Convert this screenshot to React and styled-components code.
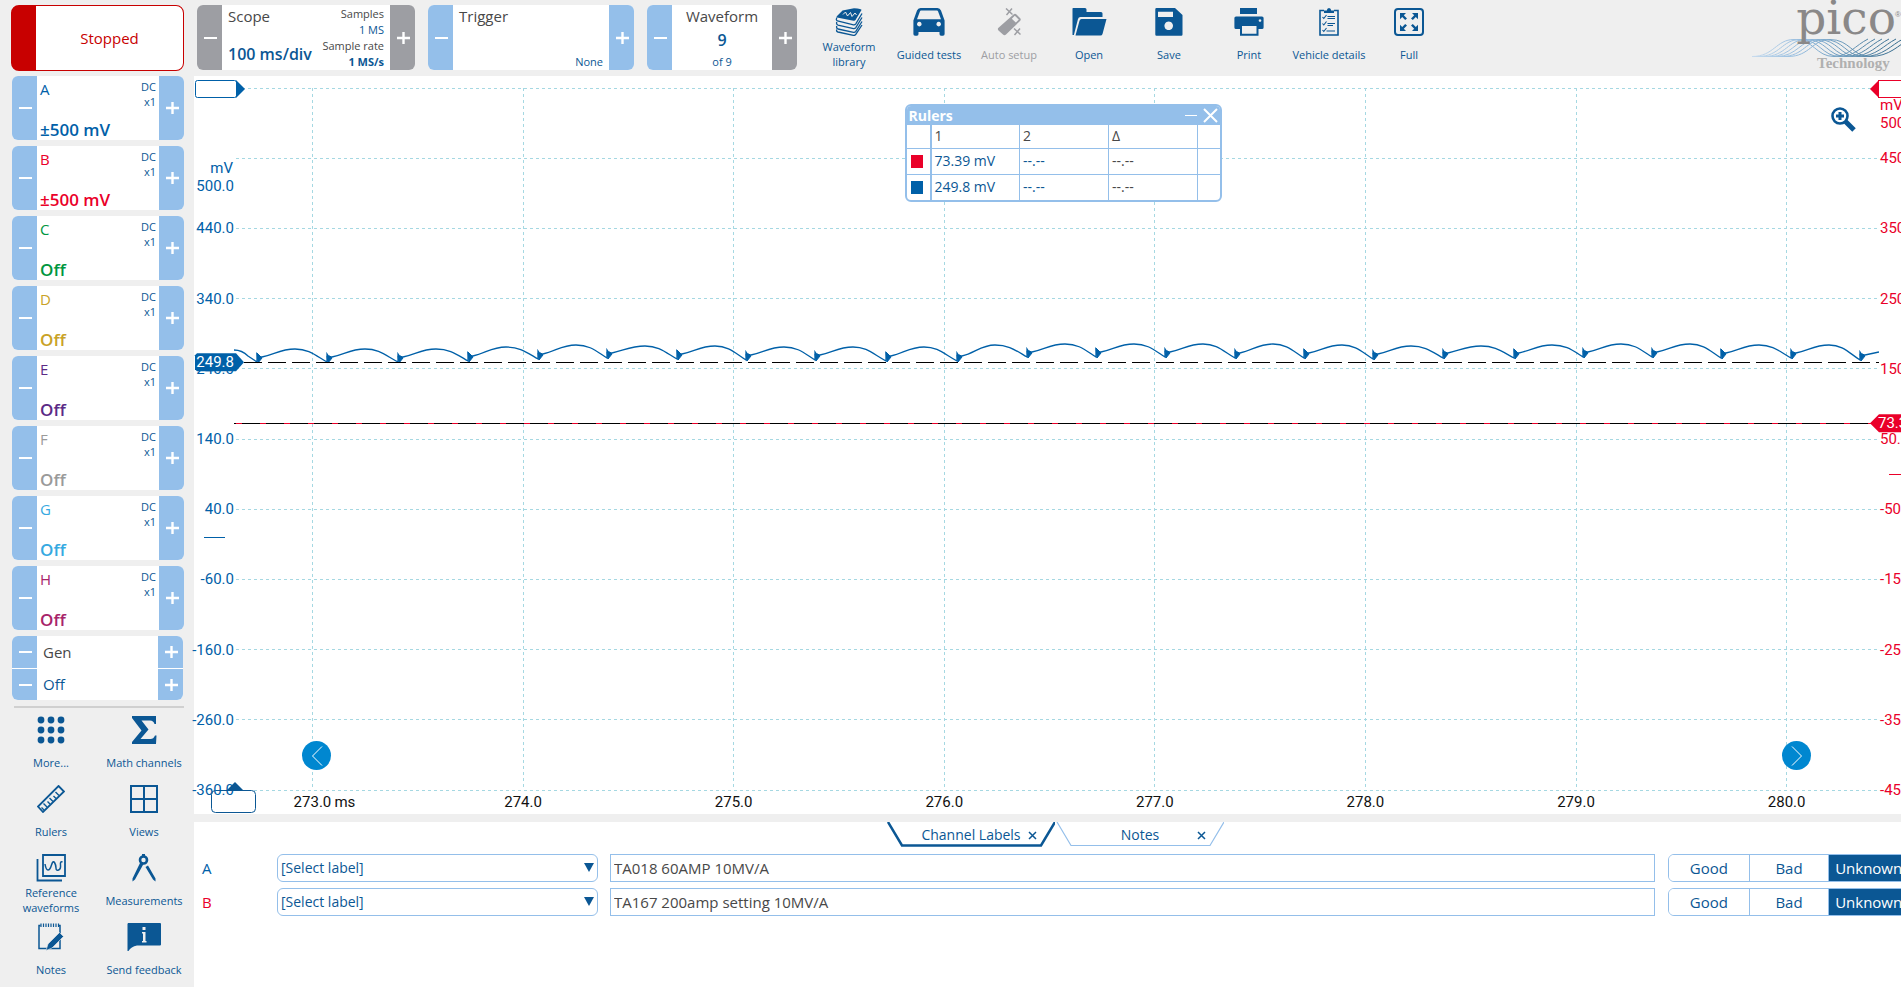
import React from "react";
import styled, { createGlobalStyle, css } from "styled-components";

const UI = '"Open Sans", "Noto Sans", sans-serif';
const navy = "#0b5794";
const sky = "#94bfea";
const grey = "#9d9ea3";
const blueTrace = "#0060a8";
const redTrace = "#ea0029";

const GlobalStyle = createGlobalStyle`
  *, *::before, *::after { box-sizing: border-box; }
  body { margin: 0; background: #efefef; font: 15px/20px ${UI}; color: ${navy}; }
  button, input, select { font: inherit; color: inherit; margin: 0; }
  button { border: 0; background: none; padding: 0; cursor: pointer; }
  svg { display: block; }
`;

/* ---------- shell ---------- */
const Viewport = styled.div`
  overflow: hidden;
`;
const Page = styled.div`
  display: flex;
  min-height: 100vh;
  margin-right: -18px;
`;
const Sidebar = styled.aside`
  flex: 0 0 194px;
  min-width: 0;
  padding: 5px 10px 0 12px;
  display: flex;
  flex-direction: column;
`;
const Main = styled.main`
  flex: 1;
  min-width: 0;
  display: flex;
  flex-direction: column;
`;

/* ---------- sidebar ---------- */
const RunButton = styled.button`
  height: 66px;
  margin: 0 0 5px -1px;
  border: 1px solid #c80000;
  border-left-width: 25px;
  border-radius: 8px;
  background: #fff;
  color: #c80000;
  text-align: center;
`;
const ChannelList = styled.div`
  display: flex;
  flex-direction: column;
  gap: 6px;
`;
const Card = styled.section`
  display: flex;
  height: ${(p) => p.$h || 64}px;
  width: ${(p) => (p.$w ? p.$w + "px" : "auto")};
  border-radius: 6px;
  overflow: hidden;
  background: #fff;
`;
const Step = styled.button`
  flex: 0 0 25px;
  display: grid;
  place-items: center;
  background: ${(p) => (p.$off ? grey : sky)};
`;
const ChannelBody = styled.div`
  flex: 1;
  display: grid;
  grid-template-columns: 1fr auto;
  grid-template-rows: 1fr 20px;
  padding: 3px 3px 0 3px;
  color: ${(p) => p.$color};
`;
const ChannelRange = styled.strong`
  font-size: 17px;
  font-weight: 600;
  grid-column: 1 / -1;
`;
const Coupling = styled.span`
  font-size: 11px;
  line-height: 15px;
  text-align: right;
  color: ${navy};
`;
const GenRows = styled.section`
  display: flex;
  flex-direction: column;
  gap: 1px;
  margin-right: 1px;
  border-radius: 6px;
  overflow: hidden;
`;
const GenRow = styled.div`
  display: flex;
  height: ${(p) => p.$h}px;
  background: #fff;
  box-shadow: 0 1px #fff;
`;
const GenText = styled.span`
  flex: 1;
  padding: ${(p) => p.$top}px 6px 0;
  color: ${(p) => p.$color};
`;
const Divider = styled.hr`
  width: 170px;
  margin: 6px 0 6px 2px;
  border: 0;
  border-top: 2px solid #d0d0d0;
`;
const ToolGrid = styled.nav`
  display: grid;
  grid-template-columns: 78px 108px;
  grid-auto-rows: 66px;
  row-gap: 3px;
  margin-right: -14px;
`;
const Tool = styled.button`
  display: grid;
  grid-template-rows: 28px 1fr;
  gap: 2px;
  height: 66px;
  justify-items: center;
  align-items: center;
  font-size: 11px;
  line-height: 15px;
  text-align: center;
  color: ${(p) => (p.disabled ? grey : navy)};
  padding: 2px 0;
`;

/* ---------- top bar ---------- */
const TopBar = styled.header`
  flex: 0 0 76px;
  display: flex;
  align-items: flex-start;
  padding: 5px 0 0 3px;
`;
const Deck = styled.div`
  display: flex;
  gap: 13px;
`;
const DeckBody = styled.div`
  flex: 1;
  display: flex;
  justify-content: space-between;
  white-space: nowrap;
  padding: 1px 6px;
`;
const Column = styled.div`
  display: flex;
  flex-direction: column;
  justify-content: space-between;
  ${(p) =>
    p.$align &&
    css`
      width: ${p.$align === "center" ? "100%" : "auto"};
      align-items: ${p.$align};
    `}
`;
const Title = styled.span`
  color: #484848;
`;
const Big = styled.strong`
  font-size: 16px;
  font-weight: 600;
  line-height: ${(p) => p.$lh || 30}px;
`;
const Small = styled.span`
  font-size: 11px;
  line-height: 15px;
  font-weight: ${(p) => (p.$bold ? 700 : 400)};
  color: ${(p) => p.$color || navy};
`;
const TopTools = styled.nav`
  display: flex;
  margin: 1px 0 0 12px;
  & > button {
    width: 80px;
  }
`;
const Brand = styled.div`
  margin: -5px 17px 0 auto;
`;

/* ---------- chart ---------- */
const ChartArea = styled.section`
  position: relative;
  flex: 1;
  min-height: 400px;
  display: flex;
  background: #fff;
  padding: 12px 40px 24px 40px;
`;
const Plot = styled.svg`
  flex: 1;
  min-width: 0;
  overflow: visible;
  font: 15px Roboto, sans-serif;
`;
const PageArrow = styled.button`
  position: absolute;
  bottom: 44px;
  ${(p) => p.$side}: 108px;
  width: 29px;
  height: 29px;
  border-radius: 50%;
  background: #0087d0;
  display: grid;
  place-items: center;
`;
const ZoomButton = styled.button`
  position: absolute;
  top: 30px;
  right: 62px;
`;
const RulerWindow = styled.section`
  position: absolute;
  top: 28px;
  left: calc(50% - 152px);
  width: 317px;
  border: 2px solid ${sky};
  border-radius: 6px;
  overflow: hidden;
  background: #fff;
`;
const RulerTitle = styled.header`
  display: flex;
  align-items: center;
  height: 19px;
  padding: 0 2px 0 2px;
  gap: 5px;
  background: ${sky};
  color: #fff;
  font-weight: 700;
  font-size: 14px;
  & > span {
    flex: 1;
  }
`;
const RulerTable = styled.table`
  width: 100%;
  table-layout: fixed;
  border-collapse: collapse;
  th,
  td {
    height: 26px;
    padding: 0 0 0 3px;
    font-weight: 400;
    font-size: 14px;
    line-height: 20px;
    text-align: left;
    white-space: nowrap;
    border-top: 1px solid ${sky};
    border-left: 1px solid ${sky};
  }
  th {
    height: 23px;
    border-top: 0;
    color: #484848;
  }
  tr > :first-child {
    border-left: 0;
    padding-left: 4px;
  }
  tr > :nth-child(2) {
    border-left-width: 2px;
  }
  td:nth-child(4) {
    color: #484848;
  }
`;
const Swatch = styled.span`
  display: block;
  width: 12px;
  height: 13px;
  background: ${(p) => p.$color};
`;

/* ---------- label panel ---------- */
const Panel = styled.section`
  min-height: 165px;
  margin-top: 8px;
  padding: 0 10px 16px 8px;
  background: #fff;
`;
const Tabs = styled.div`
  display: flex;
  justify-content: center;
  gap: 1px;
  margin-bottom: 7px;
  font-size: 14px;
`;
const Tab = styled.div`
  position: relative;
  width: 168px;
  height: 25px;
  display: flex;
  align-items: center;
  justify-content: center;
  & > svg {
    position: absolute;
    inset: 0;
  }
  & > button {
    position: relative;
  }
  & > button:last-child {
    position: absolute;
    right: 16px;
    top: 7px;
    padding: 2px;
  }
`;
const LabelRow = styled.div`
  display: grid;
  grid-template-columns: 63px 321px 1fr 242px;
  column-gap: 12px;
  align-items: center;
  height: 28px;
  margin-bottom: 6px;
`;
const RowName = styled.span`
  font-weight: 500;
  color: ${(p) => p.$color};
`;
const SelectBox = styled.div`
  position: relative;
  & > svg {
    position: absolute;
    right: 4px;
    top: 9px;
    pointer-events: none;
  }
`;
const Select = styled.select`
  appearance: none;
  display: block;
  width: 100%;
  height: 28px;
  padding: 0 20px 0 3px;
  border: 1px solid ${sky};
  border-radius: 6px;
  background: #fff;
  font-size: 14px;
`;
const TextBox = styled.input`
  width: 100%;
  height: 28px;
  padding: 0 3px;
  border: 1px solid ${sky};
  background: #fff;
  color: #484848;
`;
const Segments = styled.div`
  display: grid;
  grid-template-columns: repeat(3, 1fr);
  height: 28px;
  margin-left: 1px;
  border: 1px solid ${sky};
  border-radius: 6px;
  overflow: hidden;
`;
const Segment = styled.button`
  border-left: ${(p) => (p.$first ? 0 : 1)}px solid ${sky};
  background: ${(p) => (p.$on ? navy : "#fff")};
  color: ${(p) => (p.$on ? "#fff" : navy)};
`;

/* ---------- icons ---------- */
const Minus = () => (
  <svg width="14" height="14" aria-hidden="true">
    <path d="M1 7H14" stroke="#fff" strokeWidth="2" />
  </svg>
);
const Plus = () => (
  <svg width="14" height="14" aria-hidden="true">
    <path d="M1 7H14M7.500 1V13" stroke="#fff" strokeWidth="2.400" />
  </svg>
);
const Stepper = ({ name, off, children, offUp, offDown }) => (
  <>
    <Step aria-label={`${name} down`} $off={off || offDown}><Minus /></Step>
    {children}
    <Step aria-label={`${name} up`} $off={off || offUp}><Plus /></Step>
  </>
);

const Icon = ({ w, children }) => (
  <svg width={w} height="28" viewBox={`0 0 ${w} 28`} fill="currentColor" aria-hidden="true">
    {children}
  </svg>
);
const line = { fill: "none", stroke: "currentColor" };

const LibraryIcon = () => (
  <Icon w={28}>
    <path d="M7.500 2.500 19 0.300Q27 1 26.500 2L20.500 12Q20 13 18.500 12.700L2 9.500Q1 9 2 8Z" />
    <path d="M8 6.500l2.500-2.500 2 4 3-3.500 1.500 4 3-3.500 1.500 2" stroke="#efefef" fill="none" />
    <path d="M2 9.500Q.5 12 2.500 13L18.500 16.800Q20 17 20.800 15.800L27 5.500M1.800 14Q1 16.500 3 17.200L18.500 20.600Q20 20.800 20.800 19.600L27 9.500M1.800 18Q1 20.300 3 21L18.500 24.300Q20 24.500 20.800 23.300L27 13.500M1.800 21.500Q1 23.500 3 24L18.500 27.400Q20 27.600 20.800 26.400L27 17" {...line} strokeWidth="1.300" />
  </Icon>
);
const CarIcon = () => (
  <Icon w={32}>
    <path fillRule="evenodd" d="M7.500 0H24.500Q27 0 28 2.600L31.600 12.500V26Q31.600 27.800 30 27.800H28Q26.500 27.800 26.500 26V24H5.500V26Q5.500 27.800 4 27.800H2Q.4 27.800.4 26V12.500L4 2.600Q5 0 7.500 0ZM7 3.200 4 11.300H28L25 3.200Q24.700 2.400 24 2.400H8Q7.300 2.400 7 3.200ZM6.300 13.800a2.300 2.300 0 1 0 .01 0ZM25.700 13.800a2.300 2.300 0 1 0 .01 0Z" />
  </Icon>
);
const WandIcon = () => (
  <Icon w={26}>
    <path fillRule="evenodd" d="M17.500 6.500Q19 5 20.500 6.500L24 10Q25.500 11.500 24 13L10 26.500Q8.500 28 7 26.500L2.500 22.500Q1.200 21 2.500 19.800ZM18.800 7.800 15.800 10.800 19.800 14.600 22.800 11.600Z" />
    <path d="M10 .5l6.500 6M16 .5l-5.500 6.500M18 20.500l6.500 6M24 20.500l-5.500 6.500" {...line} strokeWidth="1.500" />
  </Icon>
);
const FolderIcon = () => (
  <Icon w={35}>
    <path d="M1 0H13Q14.500 0 14.500 1.500V4H29Q30.500 4 30.500 5.500V9H8.500Q6.500 9 6 11L2 26.500V27H.5V.5ZM9.500 11H34.500L30.500 26Q30 27.600 28.500 27.600H3.500L7.500 12.800Q8 11 9.500 11Z" />
  </Icon>
);
const SaveIcon = () => (
  <Icon w={28}>
    <path fillRule="evenodd" d="M1.500 0H20L27.500 7V26.500Q27.500 27.700 26.300 27.700H1.500Q.3 27.700.3 26.500V1.200Q.3 0 1.500 0ZM3 3.800V9H18V3.800ZM13.700 13.500a4.300 4.300 0 1 0 .01 0Z" />
  </Icon>
);
const PrintIcon = () => (
  <Icon w={30}>
    <path d="M6 0H23V6H6Z" />
    <path fillRule="evenodd" d="M2 8.500H28Q29.600 8.500 29.600 10V19.500Q29.600 21 28 21H24.500V27.700H6V21H2Q.4 21 .4 19.500V10Q.4 8.500 2 8.500ZM8 18V25.700H22.500V18ZM26 11.200a1.300 1.300 0 1 0 .01 0Z" />
  </Icon>
);
const VehicleIcon = () => (
  <Icon w={20}>
    <path d="M5 2.500H1V27H19V2.500H15" {...line} strokeWidth="1.600" />
    <path d="M5 5V2.500H7.800Q8 0 10 0T12.200 2.500H15V5Z" />
    <path d="M3.500 9l1.300 1.500L7.500 7M3.500 15.500l1.300 1.500 2.700-3.500M3.500 22l1.300 1.500L7.500 20M8.500 8.500H16M8.500 10.500H16M8.500 15.500H16M8.500 17.500H14M7.500 23H16" {...line} strokeWidth="1.100" />
  </Icon>
);
const FullIcon = () => (
  <Icon w={30}>
    <rect x="1" y="1" width="28" height="26" rx="3" {...line} strokeWidth="2" />
    <path d="M6 5H12L9.800 7.200 13 10.400 11.200 12 8.200 9 6 11.200ZM24 5H18L20.200 7.200 17 10.400 18.800 12 21.800 9 24 11.200ZM6 23H12L9.800 20.800 13 17.600 11.200 16 8.200 19 6 16.800ZM24 23H18L20.200 20.800 17 17.600 18.800 16 21.800 19 24 16.800Z" />
  </Icon>
);
const MoreIcon = () => (
  <Icon w={28}>
    {[4, 14, 24].map((y) => [4, 14, 24].map((x) => <circle key={`${x}-${y}`} cx={x} cy={y} r="3.400" />))}
  </Icon>
);
const SigmaIcon = () => (
  <Icon w={26}>
    <path d="M1 0H25V8H23.500Q22.500 4.500 19 4.500H10.500L17.500 13.500 9.500 23H19.500Q22.500 23 24 19.500H25.500L25 28H1V26L10.500 14.500 1 2Z" />
  </Icon>
);
const RulerIcon = () => (
  <Icon w={28}>
    <path d="M21.500 1 27 6.500 6 27 1 21.500Z" {...line} strokeWidth="1.800" />
    <path d="M7 25l-2.500-2.500M10 22l-3.500-3.500M13 19l-2.500-2.500M16 16.500l-3.500-3.500M19 13.500l-2.500-2.500M22 10.500l-3.500-3.500" {...line} strokeWidth="1.400" />
  </Icon>
);
const ViewsIcon = () => (
  <Icon w={28}>
    <path d="M1 1H27V27H1ZM14 1V27M1 14H27" {...line} strokeWidth="2" />
  </Icon>
);
const ReferenceIcon = () => (
  <Icon w={30}>
    <path d="M7 1H29V22H7Z" {...line} strokeWidth="1.800" />
    <path d="M1.500 5V26.500H26" {...line} strokeWidth="1.800" />
    <path d="M9 10Q10 16 12 16T15.500 11T18.500 8.500T20 14T22.500 16T24.500 11T26.500 8" {...line} strokeWidth="1.500" />
  </Icon>
);
const MeasureIcon = () => (
  <Icon w={26}>
    <circle cx="12.500" cy="6" r="3.500" {...line} strokeWidth="2.600" />
    <path d="M11 0H14V3H11ZM9.500 8 12.500 10 4 25.500 1.500 27.500V24.500ZM14.500 13 17 11.500 24.500 24.500V27.500L22 25.500Z" />
  </Icon>
);
const NotesIcon = () => (
  <Icon w={26}>
    <path d="M2.500 2.500H1V25.500H22V2.500H20.500" {...line} strokeWidth="1.500" />
    <path d="M3 .5V4M5.500.5V4M8 .5V4M10.500.5V4M13 .5V4M15.500.5V4M18 .5V4M20.500.5V4" {...line} strokeWidth="1.200" />
    <path d="M21.500 9.500 25.500 13.500 14 25 8 27.500 10 21Z" stroke="#efefef" strokeWidth=".6" />
  </Icon>
);
const FeedbackIcon = () => (
  <Icon w={34}>
    <path fillRule="evenodd" d="M1 0H33Q34 0 34 1V21.500Q34 22.500 33 22.500H10Q4 23.500 1.500 28H.5V1ZM15.500 4V7H18.500V4ZM15 9V10.500H16V18H15V19.500H19.500V18H18.500V9Z" />
  </Icon>
);

/* ---------- data ---------- */
const channels = [
  ["A", blueTrace, "±500 mV"],
  ["B", redTrace, "±500 mV"],
  ["C", "#009640", "Off"],
  ["D", "#c9a227", "Off"],
  ["E", "#5b2a86", "Off"],
  ["F", "#9a9a9a", "Off"],
  ["G", "#36a9e1", "Off"],
  ["H", "#a8246a", "Off"],
];
const sideTools = [
  ["More...", MoreIcon],
  ["Math channels", SigmaIcon],
  ["Rulers", RulerIcon],
  ["Views", ViewsIcon],
  ["Reference\nwaveforms", ReferenceIcon],
  ["Measurements", MeasureIcon],
  ["Notes", NotesIcon],
  ["Send feedback", FeedbackIcon],
];
const topTools = [
  ["Waveform\nlibrary", LibraryIcon],
  ["Guided tests", CarIcon],
  ["Auto setup", WandIcon],
  ["Open", FolderIcon],
  ["Save", SaveIcon],
  ["Print", PrintIcon],
  ["Vehicle details", VehicleIcon],
  ["Full", FullIcon],
];
const multiline = (text) =>
  text.split("\n").map((t, i) => (
    <React.Fragment key={t}>{i > 0 && <br />}{t}</React.Fragment>
  ));

/* Ripple minima and the crest that follows each one, in plot units (1645 x 702). */
const dips = [
  [23, 274, 261], [93, 274, 261], [164, 274, 261], [234, 273, 259], [304, 271, 257],
  [373, 270, 258], [443, 271, 258], [512, 272, 259], [581, 272, 259], [652, 273, 259],
  [723, 273, 257], [793, 269, 256], [862, 269, 256], [931, 269, 256], [1001, 270, 256],
  [1070, 270, 257], [1139, 271, 258], [1209, 270, 258], [1280, 270, 257], [1349, 269, 256],
  [1418, 269, 256], [1487, 270, 257], [1557, 270, 257], [1626, 272, 258],
];
const ripple = dips.reduce((d, [x, y, crest], i) => {
  const next = dips[i + 1];
  const start = `${d}L${x} ${y}V${y - 8}L${x + 2} ${y - 5}L${x + 5} ${y - 5}`;
  if (!next) return `${start}L1645 ${y - 8}`;
  return `${start}C${x + 18} ${y - 8} ${x + 24} ${crest} ${x + 38} ${crest}C${x + 52} ${crest} ${x + 58} ${next[1] - 7} ${next[0]} ${next[1]}`;
}, "M0 262Q8 262 14 268");
const bursts = dips.map(([x, y], i) => `M${x} ${y - (i % 3 ? 6 : 9)}L${x + 3} ${y - 6}L${x + 5} ${y - 4}L${x + 1} ${y + 1}Z`).join("");

const leftAxis = ["440.0", "340.0", "240.0", "140.0", "40.0", "-60.0", "-160.0", "-260.0", "-360.0"];
const rightAxis = ["450.0", "350.0", "250.0", "150.0", "50.0", "-50.0", "-150.0", "-250.0", "-350.0", "-450.0"];
const times = ["273.0", "274.0", "275.0", "276.0", "277.0", "278.0", "279.0", "280.0"];
const timeX = (i) => `${4.77 + i * 12.802}%`;

const Chart = () => (
  <Plot role="img" aria-label="Channel A and B waveforms">
    <g stroke="#a5d8e2" strokeDasharray="3 3" shapeRendering="crispEdges">
      {Array.from({ length: 11 }, (_, k) => (
        <line key={k} x1="2" x2="100%" y1={`${k * 10}%`} y2={`${k * 10}%`} />
      ))}
      {times.map((t, i) => (
        <line key={t} x1={timeX(i)} x2={timeX(i)} y1="0" y2="100%" />
      ))}
    </g>

    <g fill={blueTrace} textAnchor="end">
      <text x="-1" y="14%" dy="-13">mV</text>
      <text x="0" y="14%" dy="5">500.0</text>
      {leftAxis.map((t, i) => (
        <text key={t} x="0" y={`${(i + 2) * 10}%`} dy="5">{t}</text>
      ))}
    </g>
    <g fill={redTrace}>
      <text x="100%" dx="1" y="5%" dy="-13">mV</text>
      <text x="100%" dx="1" y="5%" dy="5">500.0</text>
      {rightAxis.map((t, i) => (
        <text key={t} x="100%" dx="1" y={`${(i + 1) * 10}%`} dy="5">{t}</text>
      ))}
    </g>
    <g fill="#111">
      {times.map((t, i) => (
        <text key={t} x={timeX(i)} y="100%" dy="17" textAnchor="middle">{t}</text>
      ))}
      <text x={timeX(0)} dx="22" y="100%" dy="17">ms</text>
    </g>

    <svg width="100%" height="100%" viewBox="0 0 1645 702" preserveAspectRatio="none">
      <path d={ripple} fill="none" stroke={blueTrace} strokeWidth="1.300" vectorEffect="non-scaling-stroke" />
      <path d={bursts} fill={blueTrace} stroke={blueTrace} vectorEffect="non-scaling-stroke" />
    </svg>

    <g shapeRendering="crispEdges">
      <line x1="0" x2="100%" y1="39.080%" y2="39.080%" stroke="#000" strokeDasharray="18 6" strokeDashoffset="14" />
      <line x1="0" x2="100%" y1="47.750%" y2="47.750%" stroke={redTrace} />
      <line x1="0" x2="100%" y1="47.750%" y2="47.750%" stroke="#000" strokeDasharray="18 6" strokeDashoffset="16" />
      <line x1="-30" x2="-9" y1="64.060%" y2="64.060%" stroke={blueTrace} />
    </g>
    <svg x="100%" y="55.100%" overflow="visible">
      <path d="M10 0H31" stroke={redTrace} shapeRendering="crispEdges" />
    </svg>

    <svg x="0" y="0" overflow="visible">
      <rect x="-38.500" y="-7.500" width="41" height="17" rx="2" fill="#fff" stroke={blueTrace} />
      <path d="M2-8 11 1 2 10Z" fill={blueTrace} />
    </svg>
    <svg x="100%" y="0" overflow="visible">
      <rect x="-.5" y="-7.500" width="41" height="17" fill="#fff" stroke={redTrace} />
      <path d="M0-8-9 1 0 10Z" fill={redTrace} />
    </svg>
    <svg x="0" y="39.080%" overflow="visible">
      <path d="M-37-9H2L10 0 2 9H-37L-39 7V-7Z" fill={blueTrace} />
      <text x="0" y="5" textAnchor="end" fill="#fff">249.8</text>
    </svg>
    <svg x="100%" y="47.750%" overflow="visible">
      <path d="M40-9H0L-9 0 0 9H40Z" fill={redTrace} />
      <text x="-1" y="5" fill="#fff">73.39</text>
    </svg>
    <svg x="0" y="100%" overflow="visible">
      <rect x="-22.500" y=".5" width="44" height="22" rx="4" fill="none" stroke={navy} />
      <path d="M-7 0 1-8 9 0Z" fill={navy} />
    </svg>
  </Plot>
);

const Logo = () => (
  <svg width="150" height="72" viewBox="0 0 150 72" role="img" aria-label="pico Technology">
    <defs>
      <linearGradient id="wave" x1="0" x2="150" y1="0" y2="0" gradientUnits="userSpaceOnUse">
        <stop offset="0" stopColor="#c8dcee" />
        <stop offset=".35" stopColor="#8fb8dc" />
        <stop offset=".7" stopColor="#5f8fb0" />
        <stop offset="1" stopColor="#2f6688" />
      </linearGradient>
    </defs>
    <g fill="none" stroke="url(#wave)">
      {[0, 1, 2, 3, 4, 5, 6].map((i) => (
        <path key={i} d={`M0 56.500H${i * 6}C${22 + i * 6} 56.500 ${24 + i * 6} 39.500 ${42 + i * 6} 39.500C${62 + i * 6} 39.500 ${64 + i * 6} 56.500 ${82 + i * 6} 56.500C${96 + i * 7} 56.500 ${104 + i * 7} 45 ${116 + i * 7} 39`} />
      ))}
    </g>
    <text x="144" y="34" textAnchor="end" fontFamily='"DejaVu Serif", serif' fontSize="47" fill="#8a8888">pico</text>
    <text x="143" y="17" fontFamily='"Liberation Sans", sans-serif' fontSize="8" fill="#8a8888">®</text>
    <text x="65" y="68" fontFamily='"Liberation Serif", serif' fontWeight="700" fontSize="15" fill="#b0b0b0">Technology</text>
  </svg>
);

const TabItem = ({ active, children }) => (
  <Tab>
    <svg width="168" height="25" aria-hidden="true">
      <path d="M1 0 15 23.500H154L168 0" fill="none" stroke={active ? navy : sky} strokeWidth={active ? 2.5 : 1.2} />
    </svg>
    <button role="tab" aria-selected={!!active}>{children}</button>
    <button aria-label={`Close ${children}`}>
      <svg width="9" height="9"><path d="M1 1 8 8M8 1 1 8" stroke={navy} strokeWidth="1.500" /></svg>
    </button>
  </Tab>
);

const LabelLine = ({ name, color, value }) => (
  <LabelRow>
    <RowName $color={color}>{name}</RowName>
    <SelectBox>
      <Select aria-label={`Label for channel ${name}`}><option>[Select label]</option></Select>
      <svg width="10" height="9"><path d="M0 0H10L5 9Z" fill={navy} /></svg>
    </SelectBox>
    <TextBox aria-label={`Description for channel ${name}`} defaultValue={value} />
    <Segments role="group" aria-label={`Result for channel ${name}`}>
      {["Good", "Bad", "Unknown"].map((t, i) => (
        <Segment key={t} $first={i === 0} $on={i === 2} aria-pressed={i === 2}>{t}</Segment>
      ))}
    </Segments>
  </LabelRow>
);

export default function App() {
  return (
    <Viewport>
      <GlobalStyle />
      <Page>
        <Sidebar>
          <RunButton>Stopped</RunButton>
          <ChannelList>
            {channels.map(([name, color, range]) => (
              <Card key={name}>
                <Stepper name={`Channel ${name}`}>
                  <ChannelBody $color={color}>
                    <RowName $color={color}>{name}</RowName>
                    <Coupling>DC<br />x1</Coupling>
                    <ChannelRange>{range}</ChannelRange>
                  </ChannelBody>
                </Stepper>
              </Card>
            ))}
            <GenRows>
              <GenRow $h={32}>
                <Stepper name="Generator"><GenText $top={6} $color="#484848">Gen</GenText></Stepper>
              </GenRow>
              <GenRow $h={31}>
                <Stepper name="Generator output"><GenText $top={5} $color={navy}>Off</GenText></Stepper>
              </GenRow>
            </GenRows>
          </ChannelList>
          <Divider />
          <ToolGrid>
            {sideTools.map(([text, Glyph]) => (
              <Tool key={text}><Glyph /><span>{multiline(text)}</span></Tool>
            ))}
          </ToolGrid>
        </Sidebar>

        <Main>
          <TopBar>
            <Deck>
              <Card $w={218} $h={65}>
                <Stepper name="Timebase" off>
                  <DeckBody>
                    <Column><Title>Scope</Title><Big>100 ms/div</Big></Column>
                    <Column $align="flex-end">
                      <Small $color="#484848">Samples</Small>
                      <Small>1 MS</Small>
                      <Small $color="#484848">Sample rate</Small>
                      <Small $bold>1 MS/s</Small>
                    </Column>
                  </DeckBody>
                </Stepper>
              </Card>
              <Card $w={206} $h={65}>
                <Stepper name="Trigger">
                  <DeckBody>
                    <Title>Trigger</Title>
                    <Column><span /><Small>None</Small></Column>
                  </DeckBody>
                </Stepper>
              </Card>
              <Card $w={150} $h={65}>
                <Stepper name="Waveform" offUp>
                  <DeckBody>
                    <Column $align="center">
                      <Title>Waveform</Title>
                      <Big $lh={20}>9</Big>
                      <Small>of 9</Small>
                    </Column>
                  </DeckBody>
                </Stepper>
              </Card>
            </Deck>
            <TopTools>
              {topTools.map(([text, Glyph]) => (
                <Tool key={text} disabled={text === "Auto setup"}><Glyph /><span>{multiline(text)}</span></Tool>
              ))}
            </TopTools>
            <Brand><Logo /></Brand>
          </TopBar>

          <ChartArea>
            <Chart />
            <PageArrow $side="left" aria-label="Previous">
              <svg width="12" height="20"><path d="M11 0.500 1.500 10 11 19.500" fill="none" stroke="#fff" /></svg>
            </PageArrow>
            <PageArrow $side="right" aria-label="Next">
              <svg width="12" height="20"><path d="M1 0.500 10.500 10 1 19.500" fill="none" stroke="#fff" /></svg>
            </PageArrow>
            <ZoomButton aria-label="Zoom">
              <svg width="27" height="27">
                <circle cx="10" cy="10" r="7.500" fill="none" stroke={navy} strokeWidth="2.600" />
                <path d="M10 6V14M6 10H14" stroke={navy} strokeWidth="3" />
                <path d="M15 15 24 24" stroke={navy} strokeWidth="5" />
              </svg>
            </ZoomButton>
            <RulerWindow>
              <RulerTitle>
                <span>Rulers</span>
                <button aria-label="Minimise">
                  <svg width="13" height="13"><path d="M0 6.500H12" stroke="#fff" /></svg>
                </button>
                <button aria-label="Close">
                  <svg width="15" height="15"><path d="M1 1 14 14M14 1 1 14" stroke="#fff" strokeWidth="2" /></svg>
                </button>
              </RulerTitle>
              <RulerTable>
                <colgroup>
                  <col width="24" /><col width="89" /><col width="89" /><col width="89" /><col />
                </colgroup>
                <thead>
                  <tr><th aria-label="Channel" /><th>1</th><th>2</th><th>Δ</th><th aria-label="Options" /></tr>
                </thead>
                <tbody>
                  <tr><td><Swatch $color={redTrace} /></td><td>73.39 mV</td><td>--.--</td><td>--.--</td><td /></tr>
                  <tr><td><Swatch $color={blueTrace} /></td><td>249.8 mV</td><td>--.--</td><td>--.--</td><td /></tr>
                </tbody>
              </RulerTable>
            </RulerWindow>
          </ChartArea>

          <Panel>
            <Tabs role="tablist">
              <TabItem active>Channel Labels</TabItem>
              <TabItem>Notes</TabItem>
            </Tabs>
            <LabelLine name="A" color={blueTrace} value="TA018 60AMP 10MV/A" />
            <LabelLine name="B" color={redTrace} value="TA167 200amp setting 10MV/A" />
          </Panel>
        </Main>
      </Page>
    </Viewport>
  );
}
